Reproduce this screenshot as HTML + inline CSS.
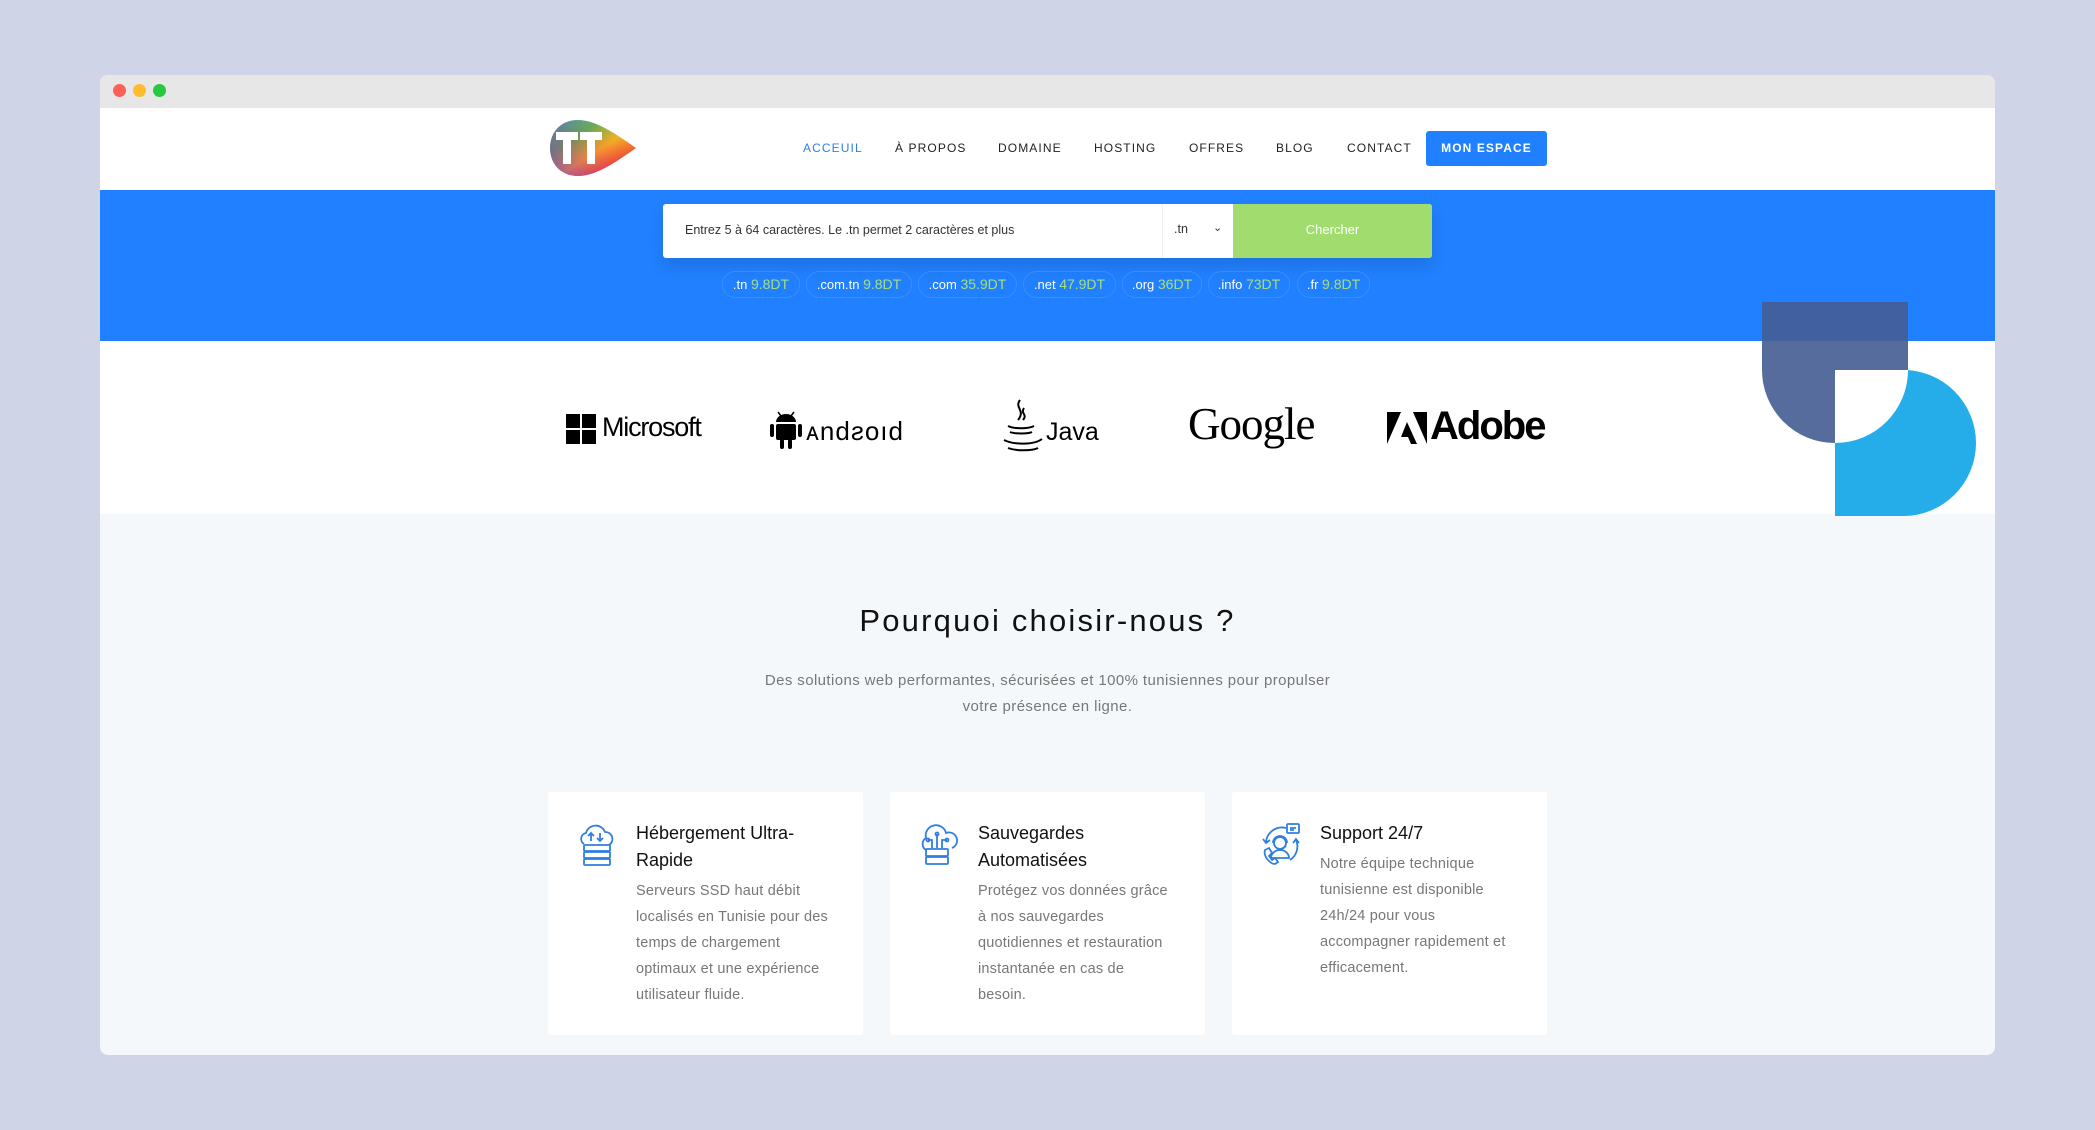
<!DOCTYPE html>
<html><head><meta charset="utf-8">
<style>
*{margin:0;padding:0;box-sizing:border-box}
body{width:2095px;height:1130px;background:#cfd5e7;font-family:"Liberation Sans",sans-serif;position:relative;overflow:hidden}
.win{position:absolute;left:100px;top:75px;width:1895px;height:980px;background:#f5f8fb;border-radius:8px;overflow:hidden}
.tb{position:absolute;left:0;top:0;width:100%;height:33px;background:#e7e7e7}
.dot{position:absolute;top:9px;width:13px;height:13px;border-radius:50%}
.hdr{position:absolute;top:33px;left:0;width:100%;height:82px;background:#fff}
.nav{position:absolute;top:34px;font-size:12px;letter-spacing:1.1px;color:#222;line-height:1}
.btn{position:absolute;left:1326px;top:23px;width:121px;height:35px;background:#2180ff;border-radius:3px;color:#fff;font-size:12px;letter-spacing:1.1px;text-align:center;line-height:35px;font-weight:bold}
.band{position:absolute;top:115px;left:0;width:100%;height:151px;background:#2180ff}
.search{position:absolute;left:563px;top:14px;width:769px;height:54px;background:#fff;border-radius:3px;box-shadow:0 8px 16px rgba(0,0,0,.12)}
.pill{position:absolute;top:81px;height:27px;border:1px solid #3b8cff;border-radius:14px;color:#fff;font-size:13px;line-height:25px;text-align:center}
.pill b{color:#a6df7a;font-weight:normal;font-size:14px}
.logos{position:absolute;top:266px;left:0;width:100%;height:173px;background:#fff}
.card{position:absolute;top:717px;width:315px;height:243px;background:#fff;border-radius:3px}
.card h3{position:absolute;left:88px;top:28px;font-size:18px;font-weight:normal;color:#111;line-height:27px;width:200px}
.card p{position:absolute;left:88px;font-size:14.5px;color:#777;line-height:26px;width:196px;letter-spacing:.2px}
.card svg{position:absolute;left:26px;top:30px}
</style></head><body>
<div class="win">
<div class="tb">
<div class="dot" style="left:13px;background:#fe5f57"></div>
<div class="dot" style="left:33px;background:#febc2e"></div>
<div class="dot" style="left:53px;background:#28c840"></div>
</div>
<div class="hdr">
<svg style="position:absolute;left:448px;top:10px" width="90" height="60" viewBox="0 0 90 60">
<defs><linearGradient id="g" x1="0" y1="0" x2="1" y2="1"><stop offset="0" stop-color="#1fa3e0"/><stop offset=".3" stop-color="#37c05a"/><stop offset=".55" stop-color="#f7c21b"/><stop offset=".75" stop-color="#f05a2a"/><stop offset="1" stop-color="#d8167a"/></linearGradient>
<linearGradient id="g2" x1="0" y1="1" x2="1" y2="0"><stop offset="0" stop-color="#7a2ad8" stop-opacity=".7"/><stop offset=".5" stop-color="#e8256a" stop-opacity=".3"/><stop offset="1" stop-color="#f9e21a" stop-opacity=".2"/></linearGradient></defs>
<path d="M30 2 C48 2 68 16 88 30 C68 44 48 58 30 58 C12 58 2 45 2 30 C2 15 12 2 30 2Z" fill="url(#g)"/>
<path d="M30 2 C48 2 68 16 88 30 C68 44 48 58 30 58 C12 58 2 45 2 30 C2 15 12 2 30 2Z" fill="url(#g2)"/>
<path d="M8 14h22v8h-7v24h-8V22H8zM32 14h22v8h-7v24h-8V22h-7z" fill="#fff"/>
</svg>
<div class="nav" style="left:703px;color:#2d7fe0">ACCEUIL</div>
<div class="nav" style="left:795px">À PROPOS</div>
<div class="nav" style="left:898px">DOMAINE</div>
<div class="nav" style="left:994px">HOSTING</div>
<div class="nav" style="left:1089px">OFFRES</div>
<div class="nav" style="left:1176px">BLOG</div>
<div class="nav" style="left:1247px">CONTACT</div>
<div class="btn">MON ESPACE</div>
</div>
<div class="band">
<div class="search">
<div style="position:absolute;left:22px;top:19px;font-size:12.5px;color:#333">Entrez 5 à 64 caractères. Le .tn permet 2 caractères et plus</div>
<div style="position:absolute;left:499px;top:0;width:1px;height:54px;background:#eee"></div>
<div style="position:absolute;left:511px;top:18px;font-size:12.5px;color:#333">.tn</div>
<div style="position:absolute;left:550px;top:17px;font-size:11px;color:#333">&#8964;</div>
<div style="position:absolute;left:570px;top:0;width:199px;height:54px;background:#a0dd6e;border-radius:0 3px 3px 0;color:#fff;font-size:13px;text-align:center;line-height:52px">Chercher</div>
</div>
<div class="pill" style="left:622px;width:78px">.tn <b>9.8DT</b></div>
<div class="pill" style="left:706px;width:106px">.com.tn <b>9.8DT</b></div>
<div class="pill" style="left:818px;width:99px">.com <b>35.9DT</b></div>
<div class="pill" style="left:923px;width:93px">.net <b>47.9DT</b></div>
<div class="pill" style="left:1022px;width:80px">.org <b>36DT</b></div>
<div class="pill" style="left:1108px;width:82px">.info <b>73DT</b></div>
<div class="pill" style="left:1197px;width:73px">.fr <b>9.8DT</b></div>
</div>
<div class="logos">
<svg style="position:absolute;left:466px;top:73px" width="30" height="30"><rect x="0" y="0" width="14" height="14"/><rect x="16" y="0" width="14" height="14"/><rect x="0" y="16" width="14" height="14"/><rect x="16" y="16" width="14" height="14"/></svg>
<div style="position:absolute;left:502px;top:71px;font-size:27px;letter-spacing:-1.2px;color:#000;font-family:'Liberation Sans Narrow','Liberation Sans',sans-serif">Microsoft</div>
<svg style="position:absolute;left:670px;top:67px" width="145" height="42" viewBox="0 0 145 42"><path d="M8 4l3 4M24 4l-3 4" stroke="#000" stroke-width="1.5"/><path d="M6 14a10 8 0 0 1 20 0z"/><rect x="6" y="16" width="20" height="16" rx="2"/><rect x="0" y="16" width="4" height="13" rx="2"/><rect x="28" y="16" width="4" height="13" rx="2"/><rect x="10" y="31" width="4" height="10" rx="2"/><rect x="18" y="31" width="4" height="10" rx="2"/>
<text x="36" y="32" font-size="26" font-family="Liberation Sans" letter-spacing="1" fill="#000">ᴀndƨoıd</text></svg>
<svg style="position:absolute;left:900px;top:57px" width="100" height="56" viewBox="0 0 100 56"><path d="M20 2c-6 8 6 10-2 20M24 10c-4 6 4 6 -1 12" stroke="#000" stroke-width="2" fill="none"/><path d="M8 28c6 3 20 3 26 0M10 34c5 2 18 2 22 0M4 42c10 5 30 5 38-1M8 50c8 3 24 3 30 0" stroke="#000" stroke-width="2" fill="none"/><text x="46" y="42" font-size="25" font-family="Liberation Sans Narrow,Liberation Sans" fill="#000">Java</text></svg>
<div style="position:absolute;left:1088px;top:57px;font-size:45px;font-family:'Liberation Serif',serif;color:#000;letter-spacing:-1px">Google</div>
<svg style="position:absolute;left:1287px;top:71px" width="40" height="32" viewBox="0 0 40 32"><path d="M0 0h14L0 32zM26 0h14v32zM20 10l10 22h-6l-3-7h-7z"/></svg>
<div style="position:absolute;left:1330px;top:63px;font-size:40px;font-weight:bold;color:#000;letter-spacing:-2px;font-family:'Liberation Sans Narrow','Liberation Sans',sans-serif">Adobe</div>
</div>
<div style="position:absolute;left:1662px;top:227px;width:146px;height:68px;background:#41609f"></div>
<div style="position:absolute;left:1662px;top:227px;width:146px;height:141px;background:#566c9d;border-radius:0 0 73px 73px;clip-path:inset(39px 0 0 0)"></div>
<div style="position:absolute;left:1735px;top:295px;width:141px;height:146px;background:#24ade9;border-radius:0 73px 73px 0"></div>
<div style="position:absolute;left:1735px;top:295px;width:73px;height:73px;background:#fff;border-radius:0 0 73px 0"></div>

<div style="position:absolute;left:0;width:100%;top:528px;text-align:center;font-size:31px;color:#111;letter-spacing:2.2px">Pourquoi choisir-nous ?</div>
<div style="position:absolute;left:0;width:100%;top:593px;text-align:center;font-size:15px;color:#777;line-height:26px;letter-spacing:.4px">Des solutions web performantes, sécurisées et 100% tunisiennes pour propulser<br>votre présence en ligne.</div>

<div class="card" style="left:448px">
<svg width="46" height="46" viewBox="0 0 46 46" fill="none" stroke="#2f7fe0" stroke-width="1.8"><path d="M10 22a6 6 0 0 1 2-11 10 10 0 0 1 19-1 7 7 0 0 1 4 13"/><path d="M17 19v-8M14 14l3-3 3 3M26 11v8M23 16l3 3 3-3"/><rect x="10" y="23" width="26" height="6" rx="1"/><rect x="10" y="30" width="26" height="6" rx="1"/><rect x="10" y="37" width="26" height="6" rx="1"/></svg>
<h3>Hébergement Ultra-Rapide</h3>
<p style="top:86px">Serveurs SSD haut débit localisés en Tunisie pour des temps de chargement optimaux et une expérience utilisateur fluide.</p>
</div>
<div class="card" style="left:790px">
<svg width="46" height="46" viewBox="0 0 46 46" fill="none" stroke="#2f7fe0" stroke-width="1.8"><path d="M10 28a7 7 0 0 1 0-12 10 10 0 0 1 20-5 8 8 0 0 1 6 15"/><path d="M16 26v-8h-4M21 26V12M26 26v-8h5"/><circle cx="12" cy="18" r="1.5"/><circle cx="21" cy="12" r="1.5"/><circle cx="31" cy="18" r="1.5"/><rect x="10" y="27" width="22" height="7" rx="1"/><rect x="10" y="35" width="22" height="7" rx="1"/></svg>
<h3>Sauvegardes Automatisées</h3>
<p style="top:86px">Protégez vos données grâce à nos sauvegardes quotidiennes et restauration instantanée en cas de besoin.</p>
</div>
<div class="card" style="left:1132px">
<svg width="46" height="46" viewBox="0 0 46 46" fill="none" stroke="#2f7fe0" stroke-width="1.8"><path d="M8 20a16 16 0 0 1 20-14"/><path d="M5 17l3 4 4-3"/><path d="M38 18a16 16 0 0 1-6 20"/><path d="M35 21l3-4 3 4"/><rect x="29" y="2" width="12" height="9" rx="1"/><path d="M32 6h6M32 8h4"/><circle cx="22" cy="21" r="6"/><path d="M13 36a9 8 0 0 1 18 0z"/><path d="M15 21a7 7 0 0 1 14 0M28 24l-4 3"/><path d="M7 28l4-2 3 5-3 3 3 4 3-2 3 4-3 2c-5 0-12-8-10-14z"/></svg>
<h3>Support 24/7</h3>
<p style="top:59px">Notre équipe technique tunisienne est disponible 24h/24 pour vous accompagner rapidement et efficacement.</p>
</div>
</div>
</body></html>
